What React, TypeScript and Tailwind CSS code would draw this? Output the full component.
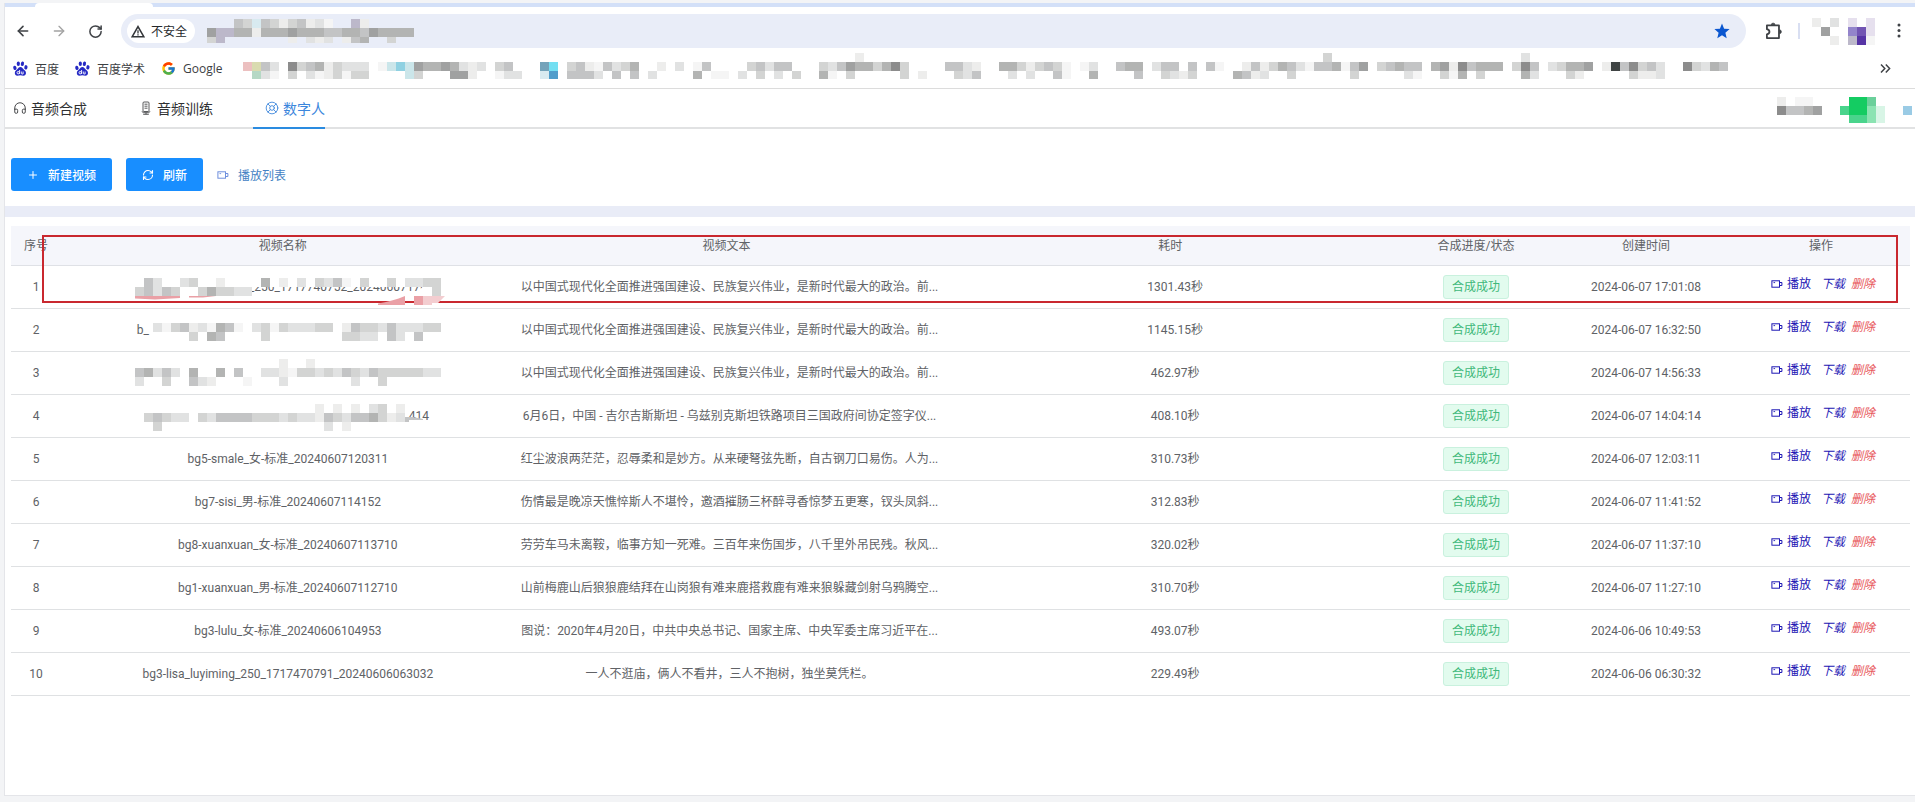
import React from "react";
import { ArrowLeft, ArrowRight, RotateCw, Headphones, LifeBuoy, RefreshCw, Plus } from "lucide-react";
import { FcGoogle } from "react-icons/fc";

const CELL = 9;

const palette: Record<string, string> = {
  "1": "#f5f5f5",
  "2": "#ededec",
  "3": "#e1e2e2",
  "4": "#d3d4d3",
  "5": "#c3c4c5",
  "6": "#b3b4b3",
  "7": "#a0a1a1",
  "8": "#8c8c8c",
  "9": "#3f4444",
  r: "#ecc0c0",
  y: "#d9dbb0",
  g: "#b5d8c5",
  b: "#cbe6ea",
  B: "#8fd1e2",
  T: "#74a3ba",
  C: "#73dff2",
  D: "#d8eaf0",
  E: "#519dcb",
  G: "#14cc62",
  H: "#4ad48c",
  I: "#6bd09b",
  J: "#8be3b2",
  K: "#d8f5e6",
  S: "#9acbe5",
  p: "#e6e0ee",
  P: "#9384cb",
  q: "#7255b3",
  Q: "#5634a5",
  u: "#bcb8ca",
  R: "#eaa0a6",
  s: "#f3cdd0",
};

type Run = [row: number, col: number, cells: string];

function Cells({ runs, dy = 0 }: { runs: Run[]; dy?: number }) {
  return (
    <>
      {runs.flatMap(([row, col, cells], r) =>
        cells
          .split("")
          .map((c, i) =>
            c === "." ? null : (
              <rect key={`${r}-${i}`} x={(col + i) * CELL} y={row * CELL + dy} width={CELL} height={CELL} fill={palette[c]} />
            ),
          ),
      )}
    </>
  );
}

function Mosaic({ cols, rows, runs, className = "" }: { cols: number; rows: number; runs: Run[]; className?: string }) {
  return (
    <svg aria-hidden="true" width={cols * CELL} height={rows * CELL} shapeRendering="crispEdges" className={`shrink-0 ${className}`}>
      <Cells runs={runs} />
    </svg>
  );
}

const urlRuns: Run[] = [
  [0, 3, "54D54245231..u2"],
  [1, 0, "7uu66266676665566576666"],
  [2, 0, "4u.......2.323.256..4"],
];

const bookmarkRuns: Run[] = [
  [0, 68, "2"],
  [0, 120, "4"],
  [0, 142, "3"],
  [1, 0, "ry53.845624333.1bBb76676323"],
  [1, 28, "45...TC.45215346"],
  [1, 46, "2.3.15"],
  [1, 56, "45355"],
  [1, 64, "4357664684"],
  [1, 78, "5532"],
  [1, 84, "66424541"],
  [1, 93, "13"],
  [1, 97, "566.355.5.51"],
  [1, 111, "252465315561"],
  [1, 123, "57.45655.67285666"],
  [1, 140, ".485.34667.2958453"],
  [1, 160, "84365"],
  [2, 1, "g31.4.3124144"],
  [2, 18, "b4...772"],
  [2, 28, "133..DE.5553.5.5.3"],
  [2, 50, "6.11.3.4.3.4"],
  [2, 64, "61.4.....4.2...435"],
  [2, 85, "3.3..51..6"],
  [2, 99, "5..4324"],
  [2, 110, "6523..4......4.....31..416.4....63...42"],
  [2, 154, "4223"],
];

const profileRuns: Run[] = [
  [0, 0, "2.3.p.p"],
  [1, 1, "7..Pqp"],
  [2, 2, "2.uQ1"],
];

const accountRuns: Run[] = [
  [0, 0, "2.11"],
  [1, 0, "85567"],
  [0, 8, "GGI"],
  [1, 7, "HGGJK..S"],
  [2, 8, "HHJK"],
];

function CameraIcon({ className = "" }: { className?: string }) {
  return (
    <svg aria-hidden="true" viewBox="0 0 12 12" width="12" height="12" fill="none" stroke="currentColor" className={className}>
      <rect x="0.9" y="2.8" width="7.6" height="6.4" strokeWidth="1" />
      <path d="M8.5 4.500h2.400v3H8.500" strokeWidth="1" />
      <path d="M2.5 4.6h1.6" strokeWidth="0.9" />
    </svg>
  );
}

function PawIcon() {
  return (
    <svg aria-hidden="true" viewBox="0 0 15 15" width="15" height="15" fill="#2529c4">
      <ellipse cx="1.900" cy="6.900" rx="1.600" ry="2.200" transform="rotate(-12 1.900 6.900)" />
      <ellipse cx="5.300" cy="2.700" rx="1.600" ry="2.300" />
      <ellipse cx="9.400" cy="2.800" rx="1.600" ry="2.300" transform="rotate(12 9.400 2.800)" />
      <ellipse cx="12.900" cy="6.300" rx="1.600" ry="2.200" transform="rotate(12 12.900 6.300)" />
      <path d="M7.400 5.900c1.400 0 2 .9 2.700 1.900.9 1.200 2.900 2.200 2.900 4.200 0 1.600-1.100 2.700-2.600 2.700-1.100 0-1.900-.4-3-.4s-1.900.4-3 .4c-1.500 0-2.600-1.100-2.600-2.700 0-2 2-3 2.900-4.200.7-1 1.300-1.900 2.700-1.900z" />
      <g fill="none" stroke="#fff" strokeWidth="0.900">
        <circle cx="5.200" cy="11.700" r="1.200" />
        <path d="M6.600 9v4M8.300 10.500v1.700q0 .8.900.8h.9V10.500" />
      </g>
    </svg>
  );
}

function MicIcon() {
  return (
    <svg aria-hidden="true" viewBox="0 0 14 14" width="14" height="14" fill="none" stroke="currentColor" strokeWidth="0.8">
      <rect x="4" y="1" width="6" height="9.500" rx="1" />
      <path d="M3.200 10.200c0 1 .6 1.500 1.500 1.500h4.600c.9 0 1.500-.5 1.500-1.500M7 11.700v1.500M4.200 13.300h5.600M5.500 3.200h3M5.500 5.200h3M5.500 7.200h3" />
    </svg>
  );
}

function WarningIcon() {
  return (
    <svg aria-hidden="true" viewBox="0 0 14 13" width="14" height="13" fill="none" stroke="#333639" strokeWidth="1.6">
      <path d="M7 1.700 12.800 11.700H1.200z" />
      <path d="M7 5.200v3.200M7 9.200v1.400" strokeWidth="1.300" />
    </svg>
  );
}

function PuzzleIcon() {
  return (
    <svg aria-hidden="true" viewBox="0 0 17 17" width="18" height="18" fill="none" stroke="#3f4246" strokeWidth="1.700" strokeLinejoin="round" className="shrink-0">
      <path d="M1.800 3.200H13.200V15.200H1.800V11.600C3.400 11.200 4.200 10.400 4.200 9.200S3.400 7.200 1.800 6.800z" />
      <path d="M6 2.600a1.700 1.500 0 0 1 3.400 0zM13.900 7.500a1.500 1.700 0 0 1 0 3.400z" fill="#3f4246" strokeWidth="0.800" />
    </svg>
  );
}

function ToolbarButton({ label, children }: { label: string; children: React.ReactNode }) {
  return (
    <button type="button" aria-label={label} className="flex w-4 shrink-0 items-center justify-center">
      {children}
    </button>
  );
}

function BrowserToolbar() {
  return (
    <div className="flex h-[46px] items-center gap-5 pb-[5px] pl-2.5 pr-2 pt-[7px] text-[#3f4246]">
      <ToolbarButton label="后退">
        <ArrowLeft size={16} strokeWidth={2.4} />
      </ToolbarButton>
      <ToolbarButton label="前进">
        <ArrowRight size={16} strokeWidth={2} className="text-[#a3a3a3]" />
      </ToolbarButton>
      <ToolbarButton label="重新加载">
        <RotateCw size={15} strokeWidth={2.4} />
      </ToolbarButton>
      <div className="-ml-0.5 flex h-[34px] flex-1 items-center rounded-full bg-[#e9edf8] pl-1.5 pr-4">
        <div className="flex h-6 items-center gap-1.5 rounded-full bg-white pl-1 pr-2 text-xs text-[#25282b]">
          <WarningIcon />
          <span>不安全</span>
        </div>
        <Mosaic cols={23} rows={3} runs={urlRuns} className="ml-3 h-6" />
        <button type="button" aria-label="收藏" className="ml-auto">
          <svg aria-hidden="true" viewBox="0 0 16 16" width="16" height="16" fill="#0b57d0">
            <path d="M8 .4l2.100 5.300 5.500.4-4.200 3.600 1.300 5.500L8 12.200l-4.700 3 1.300-5.500L.4 6.100l5.500-.4z" />
          </svg>
        </button>
      </div>
      <ToolbarButton label="扩展程序">
        <PuzzleIcon />
      </ToolbarButton>
      <div className="-ml-1 -mr-2 h-4 w-0.5 bg-[#d9dff2]" />
      <Mosaic cols={7} rows={3} runs={profileRuns} className="-mr-1" />
      <ToolbarButton label="菜单">
        <svg aria-hidden="true" viewBox="0 0 4 16" width="4" height="16" fill="#3f4246">
          <circle cx="2" cy="2" r="1.500" />
          <circle cx="2" cy="7.500" r="1.500" />
          <circle cx="2" cy="13" r="1.500" />
        </svg>
      </ToolbarButton>
    </div>
  );
}

function BookmarksBar() {
  return (
    <div className="flex h-9 items-start border-b border-[#dcdcdc] pl-2 pr-6 text-xs text-[#3c4043]">
      <a href="#baidu" className="flex h-[31px] shrink-0 items-center gap-[7px]">
        <PawIcon />
        百度
      </a>
      <a href="#xueshu" className="ml-4 flex h-[31px] shrink-0 items-center gap-[7px]">
        <PawIcon />
        百度学术
      </a>
      <a href="#google" className="ml-4 flex h-[31px] w-[82px] shrink-0 items-center gap-[7px] font-['Open_Sans','Noto_Sans_CJK_SC',sans-serif]">
        <FcGoogle size={15} />
        Google
      </a>
      <div className="min-w-0 flex-1 overflow-hidden">
        <Mosaic cols={165} rows={3} runs={bookmarkRuns} className="h-[26px]" />
      </div>
      <button type="button" aria-label="更多书签" className="flex h-[30px] items-center">
        <svg aria-hidden="true" viewBox="0 0 11 9" width="11" height="9" fill="none" stroke="#3f4246" strokeWidth="1.500">
          <path d="M1 .6 4.800 4.500 1 8.400M5.800.6l3.800 3.900-3.800 3.900" />
        </svg>
      </button>
    </div>
  );
}

function AppTabs() {
  return (
    <nav className="flex h-10 items-stretch gap-10 border-b-2 border-[#e1e2e3] pl-2 text-sm text-[#303133]">
      <a href="#synthesis" className="flex items-center gap-1">
        <Headphones size={14} strokeWidth={1.5} />
        音频合成
      </a>
      <a href="#training" className="flex items-center gap-1 pl-3">
        <MicIcon />
        音频训练
      </a>
      <a href="#avatar" aria-current="page" className="-mb-0.5 flex items-center gap-1 border-b-2 border-[#2a8be0] pl-3 text-[#3b86dc]">
        <LifeBuoy size={14} strokeWidth={1.5} />
        数字人
      </a>
      <div className="ml-auto flex items-start pr-[3px] pt-2">
        <Mosaic cols={15} rows={3} runs={accountRuns} className="h-[26px]" />
      </div>
    </nav>
  );
}

function Actions() {
  return (
    <div className="flex items-center pb-[15px] pl-1.5 pt-[29px] text-xs">
      <button type="button" className="flex h-[33px] items-center gap-[9px] rounded-[3px] bg-[#188eff] px-4 font-medium text-white">
        <Plus size={12} strokeWidth={2} />
        新建视频
      </button>
      <button type="button" className="ml-3.5 flex h-[33px] items-center gap-[9px] rounded-[3px] bg-[#188eff] px-4 font-medium text-white">
        <RefreshCw size={12} strokeWidth={2.2} />
        刷新
      </button>
      <button type="button" className="ml-3.5 flex h-[33px] items-center gap-[9px] text-[#4482c4]">
        <CameraIcon className="text-[#6f8fdd]" />
        播放列表
      </button>
    </div>
  );
}

interface Redaction {
  dy: number;
  runs: Run[];
  text?: React.ReactNode;
  under?: React.ReactNode;
  over?: React.ReactNode;
}

interface Row {
  name: string | Redaction;
  text: string;
  cost: string;
  time: string;
}

const rows: Row[] = [
  {
    name: {
      dy: 3,
      text: <span className="pl-[114px]">_250_1717740752_20240607170</span>,
      under: (
        <>
          <rect x="110" y="10" width="196" height="11" fill="#fff" />
          <path d="M282 30V25l6-4h10v9z" fill="#fff" />
        </>
      ),
      runs: [
        [1, 1, "53..34..2....6.2.3.4351.4..4.3344"],
        [2, 0, "45354..464433"],
        [2, 33, "4"],
      ],
      over: (
        <>
          <path d="M0 30H45V32L20 33.500 0 32.500zM54 30H81L68 31.500H54z" fill={palette.R} />
          <path d="M243 37.500C252 36 262 33.500 270 30V39H243z" fill={palette.R} />
          <rect x="279" y="30" width="9" height="9" fill={palette.R} />
          <path d="M288 30h22l-7 7h-6v2h-9z" fill={palette.s} />
        </>
      ),
    },
    text: "以中国式现代化全面推进强国建设、民族复兴伟业，是新时代最大的政治。前...",
    cost: "1301.43秒",
    time: "2024-06-07 17:01:08",
  },
  {
    name: {
      dy: 5,
      text: <span className="pl-0.5">b_</span>,
      runs: [
        [1, 1, ".3145231651.341433344.25443533344"],
        [2, 6, "4.65....4........4433.53.5"],
      ],
    },
    text: "以中国式现代化全面推进强国建设、民族复兴伟业，是新时代最大的政治。前...",
    cost: "1145.15秒",
    time: "2024-06-07 16:32:50",
  },
  {
    name: {
      dy: 7,
      runs: [
        [0, 16, "2..2"],
        [1, 0, "56353.6..6.5..33214434354354444433"],
        [2, 0, "3..4..532"],
        [2, 12, "1...3.......3..4"],
      ],
    },
    text: "以中国式现代化全面推进强国建设、民族复兴伟业，是新时代最大的政治。前...",
    cost: "462.97秒",
    time: "2024-06-07 14:56:33",
  },
  {
    name: {
      dy: 9,
      text: <span className="pl-[274px]">414</span>,
      runs: [
        [0, 20, "2.2.2.34.2"],
        [1, 1, "45433.43555544434332543556423"],
        [2, 2, "4"],
        [2, 21, "3.2"],
      ],
      over: (
        <>
          <path d="M270 22h8l10 2v3h-18z" fill={palette["5"]} />
          <rect x="274" y="25" width="20" height="4" fill="#fff" />
        </>
      ),
    },
    text: "6月6日，中国 - 吉尔吉斯斯坦 - 乌兹别克斯坦铁路项目三国政府间协定签字仪...",
    cost: "408.10秒",
    time: "2024-06-07 14:04:14",
  },
  {
    name: "bg5-smale_女-标准_20240607120311",
    text: "红尘波浪两茫茫，忍辱柔和是妙方。从来硬弩弦先断，自古钢刀口易伤。人为...",
    cost: "310.73秒",
    time: "2024-06-07 12:03:11",
  },
  {
    name: "bg7-sisi_男-标准_20240607114152",
    text: "伤情最是晚凉天憔悴斯人不堪怜，邀酒摧肠三杯醉寻香惊梦五更寒，钗头凤斜...",
    cost: "312.83秒",
    time: "2024-06-07 11:41:52",
  },
  {
    name: "bg8-xuanxuan_女-标准_20240607113710",
    text: "劳劳车马未离鞍，临事方知一死难。三百年来伤国步，八千里外吊民残。秋风...",
    cost: "320.02秒",
    time: "2024-06-07 11:37:10",
  },
  {
    name: "bg1-xuanxuan_男-标准_20240607112710",
    text: "山前梅鹿山后狼狼鹿结拜在山岗狼有难来鹿搭救鹿有难来狼躲藏剑射乌鸦腾空...",
    cost: "310.70秒",
    time: "2024-06-07 11:27:10",
  },
  {
    name: "bg3-lulu_女-标准_20240606104953",
    text: "图说：2020年4月20日，中共中央总书记、国家主席、中央军委主席习近平在...",
    cost: "493.07秒",
    time: "2024-06-06 10:49:53",
  },
  {
    name: "bg3-lisa_luyiming_250_1717470791_20240606063032",
    text: "一人不逛庙，俩人不看井，三人不抱树，独坐莫凭栏。",
    cost: "229.49秒",
    time: "2024-06-06 06:30:32",
  },
];

function RedactedName({ item }: { item: Redaction }) {
  return (
    <div className="relative mx-auto flex h-[42px] w-[306px] items-center text-left">
      {item.text}
      <svg aria-hidden="true" width="306" height="42" className="absolute left-0 top-0 z-20 overflow-visible">
        {item.under}
        <g shapeRendering="crispEdges">
          <Cells runs={item.runs} dy={item.dy} />
        </g>
        {item.over}
      </svg>
    </div>
  );
}

const headers = ["序号", "视频名称", "视频文本", "耗时", "合成进度/状态", "创建时间", "操作"];

function VideoTable() {
  return (
    <div className="relative ml-1.5 mr-[5px] mt-[9px] font-['Roboto','Noto_Sans_CJK_SC',sans-serif]">
      <table className="w-full table-fixed border-separate border-spacing-0 text-center text-xs text-[#606266]">
        <colgroup>
          <col className="w-[50px]" />
          <col />
          <col />
          <col />
          <col className="w-[168px]" />
          <col className="w-[172px]" />
          <col className="w-[178px]" />
        </colgroup>
        <thead>
          <tr>
            {headers.map((h) => (
              <th key={h} scope="col" className="h-10 whitespace-nowrap border-b border-[#dfe1e6] bg-[#f5f6fb] p-0 font-normal">
                {h}
              </th>
            ))}
          </tr>
        </thead>
        <tbody>
          {rows.map((row, i) => (
            <tr key={i} className="[&>td]:h-[43px] [&>td]:whitespace-nowrap [&>td]:border-b [&>td]:border-[#dfe1e3] [&>td]:py-0">
              <td>{i + 1}</td>
              <td className="pl-2.5">{typeof row.name === "string" ? row.name : <RedactedName item={row.name} />}</td>
              <td className="pl-1.5">{row.text}</td>
              <td className="pl-2.5">{row.cost}</td>
              <td>
                <span className="inline-flex h-6 items-center rounded-[3px] border border-[#c9f1de] bg-[#e2fbee] px-2 text-[#3fb87a]">
                  合成成功
                </span>
              </td>
              <td>{row.time}</td>
              <td className="pb-1.5! pl-1">
                <div className="flex items-center justify-center text-[#1c16b4]">
                  <a href="#play" className="flex items-center gap-1">
                    <CameraIcon />
                    播放
                  </a>
                  <a href="#download" className="ml-2.5 italic">
                    下载
                  </a>
                  <a href="#delete" className="ml-1.5 italic text-[#e8585c]">
                    删除
                  </a>
                </div>
              </td>
            </tr>
          ))}
        </tbody>
      </table>
      <div className="pointer-events-none absolute left-[31px] right-3 top-[9px] z-10 h-[68px] border-2 border-[#c9282f]" />
    </div>
  );
}

export default function App() {
  return (
    <div className="flex min-h-screen flex-col bg-[#f3f4f6] pb-1.5 pl-1 pt-[3px] font-['Noto_Sans_CJK_SC',sans-serif]">
      <div className="flex flex-1 flex-col border-b border-l border-[#e4e5e9] bg-white">
        <header>
          <div className="flex h-1 bg-[#d3e0f8]">
            <div className="ml-[30px] h-1 w-[118px] rounded-t bg-white" />
          </div>
          <BrowserToolbar />
          <BookmarksBar />
        </header>
        <AppTabs />
        <main>
          <Actions />
          <div className="h-[11px] bg-[#e9ecf7]" />
          <VideoTable />
        </main>
      </div>
    </div>
  );
}
